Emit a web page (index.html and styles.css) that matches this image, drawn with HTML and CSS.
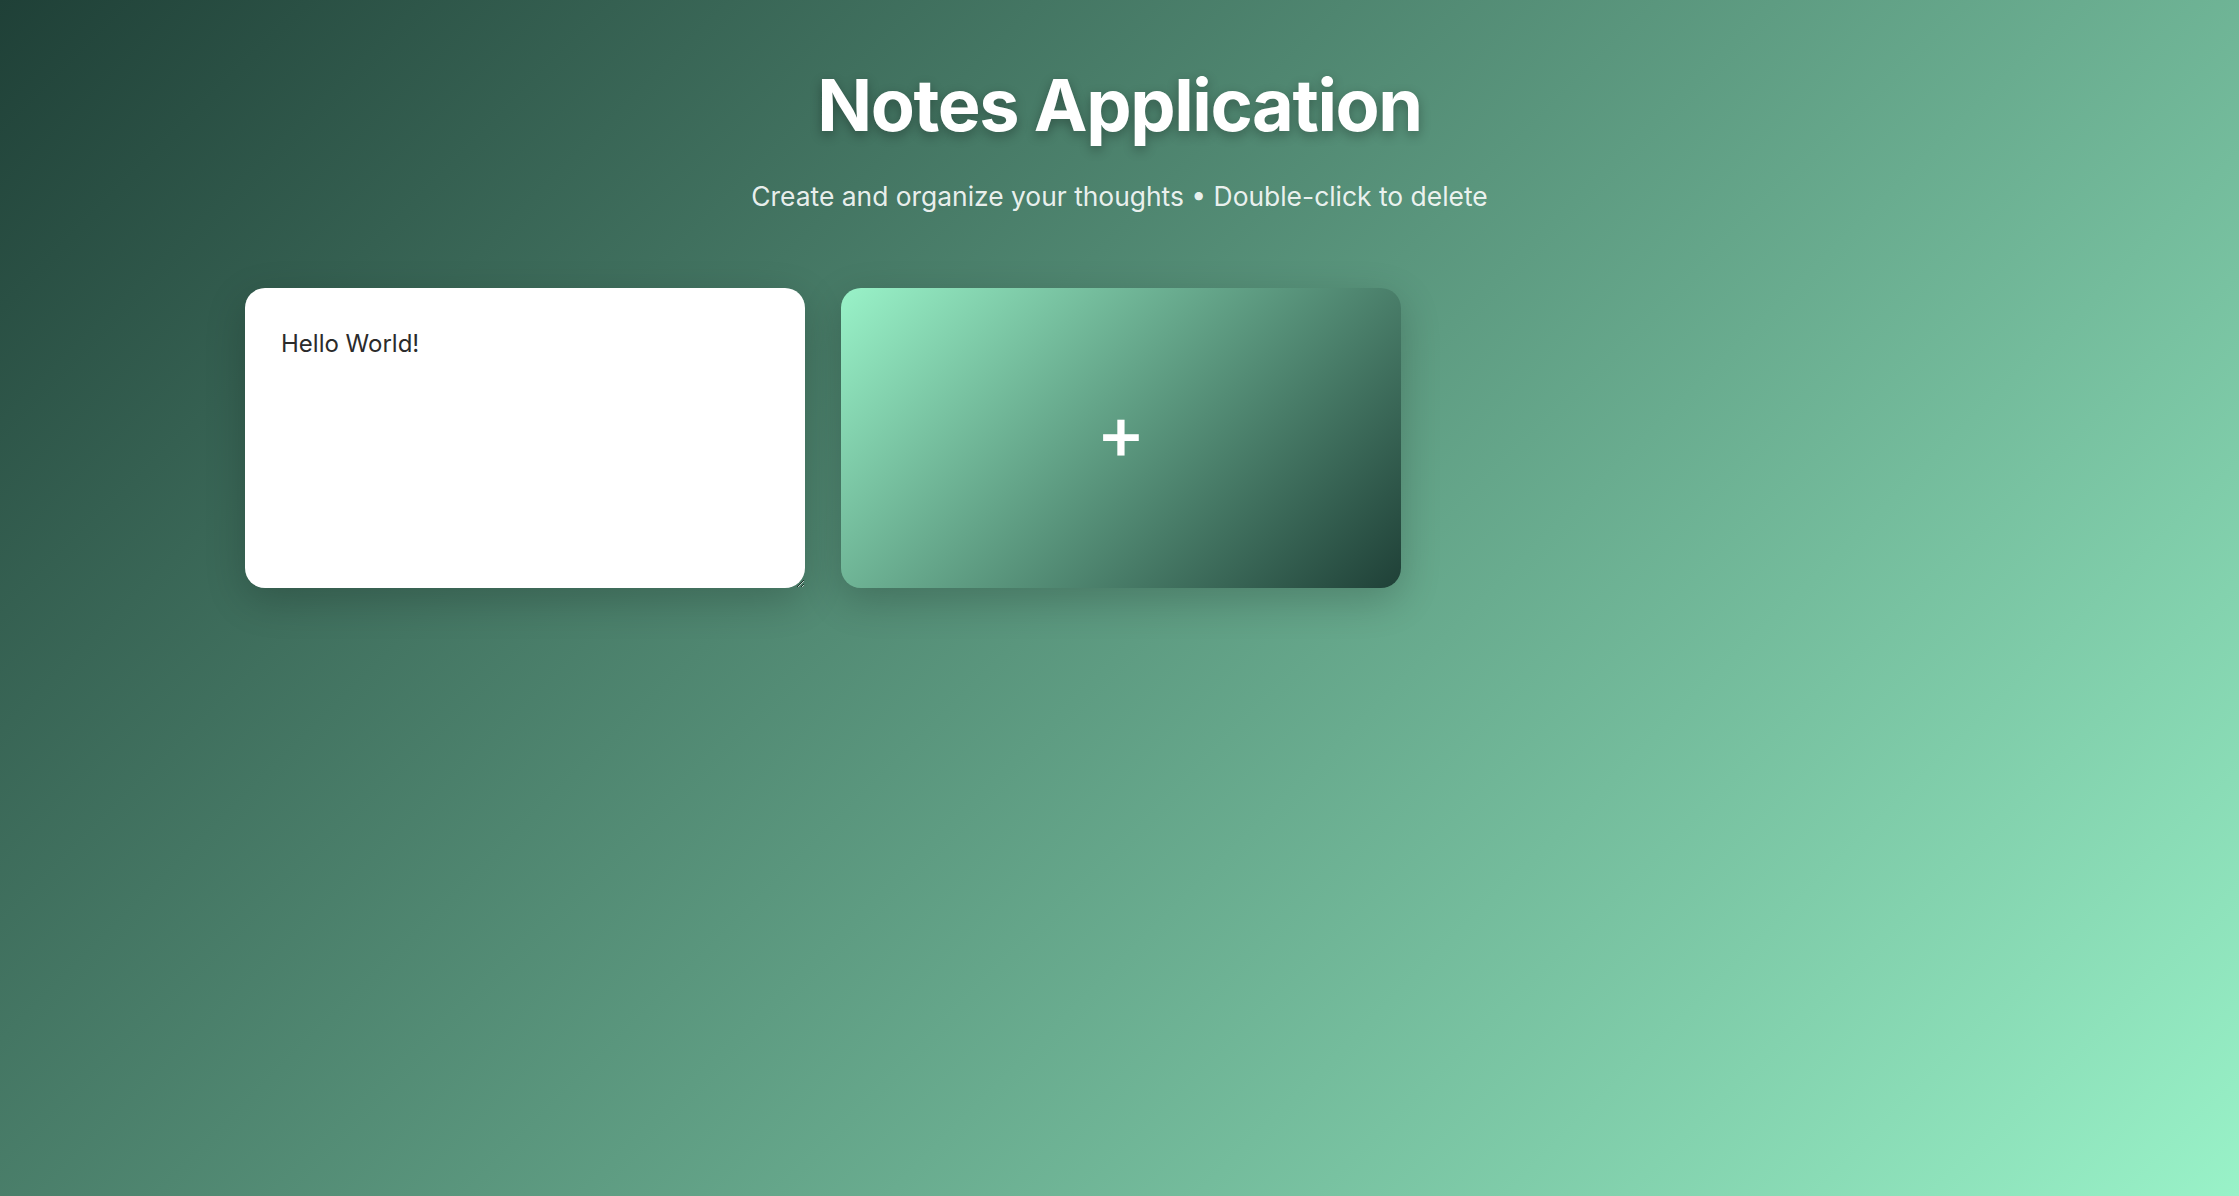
FILE: index.html
```html
<!DOCTYPE html>
<html lang="en">
<head>
<meta charset="utf-8">
<title>Notes Application</title>
<link rel="stylesheet" href="styles.css">
</head>
<body>
<header class="header">
  <h1 class="title">Notes Application</h1>
  <p class="subtitle">Create and organize your thoughts • Double-click to delete</p>
</header>
<main class="notes">
  <textarea class="note" placeholder="Empty Sticky Note">Hello World!</textarea>
  <button class="add-note" type="button" aria-label="Add note">+</button>
</main>
</body>
</html>
```
FILE: styles.css
```css
* { box-sizing: border-box; }
html, body { height: 100%; }
body {
  margin: 0;
  min-height: 100vh;
  font-family: Inter, "Noto Sans", sans-serif;
  background: linear-gradient(135deg, #1f4037 0%, #99f2c8 100%);
  background-attachment: fixed;
}
.header {
  padding-top: 62px;
  text-align: center;
}
.title {
  margin: 0;
  font-size: 72px;
  line-height: 1.2;
  font-weight: 700;
  letter-spacing: -1.4px;
  color: #ffffff;
  text-shadow: 0 4px 12px rgba(0, 0, 0, 0.3);
}
.subtitle {
  margin: 29px 0 0;
  font-size: 26.4px;
  line-height: 1.5;
  color: rgba(255, 255, 255, 0.9);
}
.notes {
  width: 1749px;
  margin: 71px auto 0;
  display: grid;
  grid-template-columns: repeat(auto-fill, 560px);
  gap: 36px;
}
.note {
  width: 560px;
  height: 300px;
  padding: 38px 36px 36px 36px;
  border: none;
  outline: none;
  border-radius: 20px;
  background: #ffffff;
  font-family: Inter, "Noto Sans", sans-serif;
  font-size: 24px;
  line-height: 1.5;
  color: #2b2b2b;
  box-shadow: 0 12px 40px rgba(0, 0, 0, 0.2);
  resize: both;
  overflow: auto;
}
.add-note {
  width: 560px;
  height: 300px;
  border: none;
  border-radius: 20px;
  background: linear-gradient(135deg, #99f2c8 0%, #1f4037 100%);
  color: #ffffff;
  font-family: Inter, "Noto Sans", sans-serif;
  font-size: 74px;
  font-weight: 500;
  line-height: 1;
  cursor: pointer;
  box-shadow: 0 12px 40px rgba(0, 0, 0, 0.2);
  display: flex;
  align-items: center;
  justify-content: center;
  padding: 0 0 12px;
}
```
